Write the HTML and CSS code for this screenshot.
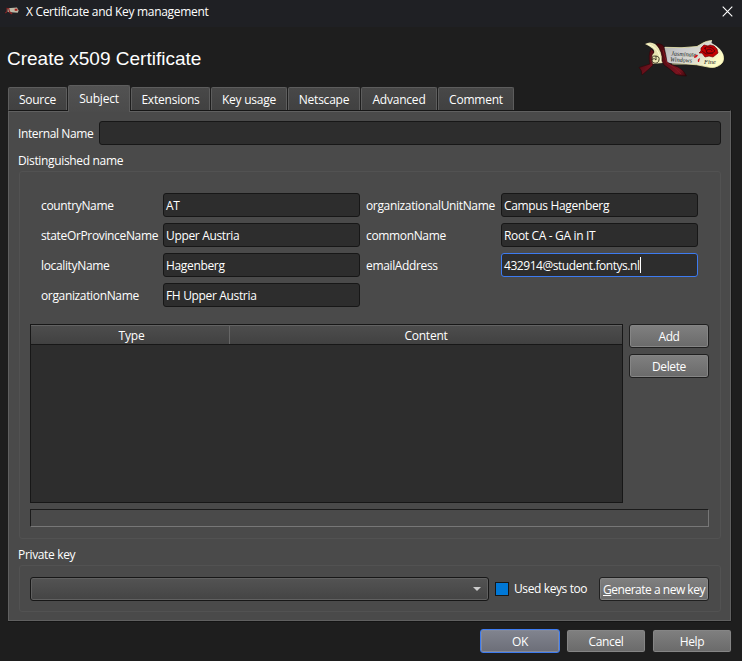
FILE: index.html
```
<!DOCTYPE html>
<html lang="en">
<head>
<meta charset="utf-8">
<title>X Certificate and Key management</title>
<link rel="stylesheet" href="styles.css">
</head>
<body>
<div class="window">
  <header class="titlebar">
    <svg class="app-icon" width="14" height="8" viewBox="0 0 88 42" preserveAspectRatio="none">
      <path d="M16 6L75 2 86 18 80 30 16 26Z" fill="#bdb9a6"/>
      <path d="M10 4L27 7 31 22 48 34 39 40 24 26 21 12 13 12 14 26 4 34 0 29 9 23Z" fill="#8e2424"/>
      <path d="M61 9H78V20H61Z" fill="#a51b18"/>
    </svg>
    <span class="window-title">X Certificate and Key management</span>
    <svg class="close" width="11" height="11" viewBox="0 0 11 11"><path d="M.7.7l9.6 9.6M10.3.7L.7 10.3" stroke="#fff" stroke-width="1.1"/></svg>
  </header>
  <div class="heading">
    <h1>Create x509 Certificate</h1>
    <svg class="logo" width="90" height="44" viewBox="0 0 90 44">
      <defs>
        <linearGradient id="paper" x1="0" y1="0" x2="1" y2=".5">
          <stop offset="0" stop-color="#aeb0a5"/><stop offset=".35" stop-color="#c9c9cc"/><stop offset=".7" stop-color="#dcdcd0"/><stop offset="1" stop-color="#fffcc5"/>
        </linearGradient>
        <linearGradient id="ribbon" x1="0" y1="0" x2="1" y2="1">
          <stop offset="0" stop-color="#420609"/><stop offset=".55" stop-color="#65101a"/><stop offset=".8" stop-color="#791420"/><stop offset="1" stop-color="#350609"/>
        </linearGradient>
      </defs>
      <path d="M26 9Q45 10.5 59 8.5L65 5Q68 3 74 2.5L73.5 5Q83 10 85.5 17Q87 25 80 28Q76 30.5 70 29Q58 26 48 26L27 25Z" fill="url(#paper)"/>
      <path d="M27 9.3Q45 10.5 59 8.5L65 5Q68 3 74 2.5M85 18Q87 25 80 28Q76 30.5 70 29Q58 26 48 26H34" fill="none" stroke="#efebae" stroke-width=".8"/>
      <path d="M7 6Q12 3 17 6Q23 10 24 17L25 25L13 26L12 17L16 15Q18 11 7 6Z" fill="#e9e3b1"/>
      <path d="M10 6.4Q18 9 21 16L23 24" fill="none" stroke="#fffed6"/>
      <path d="M14 22q-1-4 3-4 5 0 4 4-1 4-5 3-3-1-2-4 3-1 4 1M18 18v4" fill="none" stroke="#36311f" stroke-width=".9"/>
      <path d="M18 6Q24 5 26 9Q28 17 29 24Q34 27 40 29Q46 32 48.5 38Q44 38 38 36.5Q31 30 26 27L24 23Q25 14 18 6Z" fill="url(#ribbon)" stroke="#250406" stroke-width=".6"/>
      <path d="M29 25Q38 30 43 36M25 12Q27 20 29 25" stroke="#8e1621" stroke-width=".8" fill="none"/>
      <path d="M13 11Q10 17 12 26L1 29.5Q4 32 4 37L12 30L15 27Q13 23 14 17L16 14Z" fill="url(#ribbon)" stroke="#300508" stroke-width=".6"/>
      <g class="inscription">
        <text x="33" y="17.5" textLength="25" lengthAdjust="spacingAndGlyphs" transform="rotate(3 33 18)">Jasminate</text>
        <text x="32" y="23.5" textLength="22" lengthAdjust="spacingAndGlyphs" transform="rotate(3 32 24)">Windows</text>
        <text x="66" y="26" textLength="12" lengthAdjust="spacingAndGlyphs">Fine</text>
      </g>
      <path d="M63 10l3-3 4 1 2-1 4 1 3 3 1 4-5 4-4-1-4 1-3-4-3 0 2-2z" fill="#c50002" stroke="#720006" stroke-width=".7"/>
      <path d="M66 11q2-3 5-2 4 0 6 4-2 3-7 2-3-1-1-3 4-2 5 1M64 13l4 3 7-1M67 9l2 6" fill="none" stroke="#57000a" stroke-width=".9"/>
      <path d="M56 20q1-4 4-3-1 3-4 3zm4 4q-1-3 2-4l-1 4z" fill="#d21319"/>
    </svg>
  </div>
  <nav class="tabs">
    <div class="tab source"><span>Source</span></div>
    <div class="tab active"><span>Subject</span></div>
    <div class="tab extensions"><span>Extensions</span></div>
    <div class="tab usage"><span>Key usage</span></div>
    <div class="tab netscape"><span>Netscape</span></div>
    <div class="tab advanced"><span>Advanced</span></div>
    <div class="tab comment"><span>Comment</span></div>
  </nav>
  <main class="panel">
    <div class="internal"><label>Internal Name</label><div class="field"></div></div>
    <div class="group-title">Distinguished name</div>
    <section class="group names">
      <div class="name-grid">
        <label>countryName</label><div class="field">AT</div>
        <label class="right">organizationalUnitName</label><div class="field">Campus Hagenberg</div>
        <label>stateOrProvinceName</label><div class="field">Upper Austria</div>
        <label class="right">commonName</label><div class="field">Root CA - GA in IT</div>
        <label>localityName</label><div class="field">Hagenberg</div>
        <label class="right">emailAddress</label><div class="field focused"><span class="email">432914@student.fontys.nl</span><i class="caret"></i></div>
        <label>organizationName</label><div class="field">FH Upper Austria</div>
      </div>
      <div class="entries">
        <div class="table"><div class="thead"><div>Type</div><div>Content</div></div></div>
        <div class="actions"><div class="button">Add</div><div class="button">Delete</div></div>
      </div>
      <div class="status"></div>
    </section>
    <div class="group-title key-title">Private key</div>
    <section class="group key">
      <div class="combo"><i class="arrow"></i></div>
      <i class="check"></i><span class="check-label">Used keys too</span>
      <div class="button generate"><span><u>G</u>enerate a new key</span></div>
    </section>
  </main>
  <footer>
    <div class="button ok">OK</div><div class="button">Cancel</div><div class="button">Help</div>
  </footer>
</div>
</body>
</html>
```
FILE: styles.css
```
* { box-sizing: border-box; }
body { margin: 0; background: #1e1e1e; color: #fff; font: 12px/16px "Open Sans", "Noto Sans", sans-serif; letter-spacing: -.39px; }
.window { width: 742px; height: 661px; display: flex; flex-direction: column; overflow: hidden; }
.titlebar { height: 27px; flex: none; background: #1f2024; display: flex; align-items: flex-start; padding: 4px 9px 0 5px; }
.window-title { letter-spacing: -.31px; }
.app-icon { margin: 3px 7px 0 0; }
.close { margin: 2px 0 0 auto; }
.heading { height: 58px; flex: none; display: flex; justify-content: space-between; padding: 11px 14px 0 7px; }
h1 { margin: 10px 0 0; font: 19px/22px "Liberation Sans", Arial, sans-serif; letter-spacing: 0; }
.inscription { font: italic 6.5px "Liberation Serif", serif; fill: #202622; letter-spacing: 0; }
.tabs { height: 25px; flex: none; display: flex; align-items: flex-end; padding-left: 8px; letter-spacing: -.22px; }
.tab { height: 23px; border: 1px solid #5d5d5d; border-bottom: 0; border-radius: 2px 2px 0 0; background: linear-gradient(#484848, #414141); text-align: center; padding-top: 4px; margin-right: 1px; }
.source { width: 59px; }
.active { width: 62px; height: 27px; margin-bottom: -2px; padding-top: 5px; background: linear-gradient(#525252, #4b4b4b); position: relative; }
.extensions { width: 79px; }
.usage { width: 76px; }
.netscape { width: 72px; }
.advanced { width: 76px; }
.comment { width: 76px; }
.panel { margin-left: 8px; width: 723px; height: 511px; flex: none; border: 1px solid #606060; border-top: 1px solid #161616; box-shadow: inset 0 1px #606060, 0 1px #141414, 1px 0 #171717; background: #4a4a4a; padding: 10px 9px 0; }
.internal { display: flex; align-items: center; height: 24px; }
.internal label { width: 81px; padding-top: 2px; }
.internal .field { flex: 1; }
.field { height: 24px; border: 1px solid #171717; border-radius: 3px; background: #2d2d2d; padding: 4px 2px; white-space: nowrap; letter-spacing: -.34px; }
.group-title { height: 26px; padding-top: 8px; letter-spacing: -.34px; }
.group { border: 1px solid #525252; border-radius: 3px; margin-left: 1px; width: 702px; }
.names { height: 368px; padding: 21px 11px 0 10px; }
.name-grid { display: grid; grid-template-columns: 122px 197px 141px 197px; row-gap: 6px; padding-left: 11px; align-items: center; white-space: nowrap; }
.name-grid label { padding-top: 2px; letter-spacing: -.35px; }
.name-grid .right { padding-left: 6px; }
.focused { border-color: #3d7bf0; display: flex; align-items: center; }
.email { letter-spacing: -.45px; padding-top: 1px; }
.caret { width: 1px; height: 16px; background: #fff; }
.entries { display: flex; gap: 6px; height: 179px; margin-top: 17px; }
.table { width: 593px; border: 1px solid #171717; background: #2d2d2d; }
.thead { height: 20px; border-top: 1px solid #626262; border-bottom: 1px solid #171717; display: grid; grid-template-columns: 199px 1fr; background: linear-gradient(#4d4d4d, #414141); text-align: center; line-height: 20px; letter-spacing: -.22px; }
.thead div { height: 18px; }
.thead div:first-child { border-right: 1px solid #666; padding-left: 3px; }
.actions { display: flex; flex-direction: column; gap: 6px; }
.button { width: 80px; height: 24px; border: 1px solid #202020; border-radius: 3px; background: linear-gradient(#808080, #6a6a6a); box-shadow: inset 0 0 0 1px #858585; text-align: center; line-height: 23px; white-space: nowrap; }
.status { height: 18px; margin-top: 6px; border: 1px solid; border-color: #1b1b1b #777 #777 #1b1b1b; }
.key-title { padding-top: 8px; }
.key { height: 47px; display: flex; align-items: center; padding: 0 11px 0 10px; }
.combo { width: 459px; height: 24px; border: 1px solid #171717; border-radius: 3px; background: linear-gradient(#535353, #444); box-shadow: inset 0 0 0 1px #606060; display: flex; justify-content: flex-end; align-items: center; padding-right: 7px; }
.arrow { border: 4px solid transparent; border-top-color: #ccc; border-bottom: 0; }
.check { width: 14px; height: 14px; border: 1px solid #171717; background: #0078d7; margin: 0 5px 0 6px; }
.generate { width: 110px; margin-left: auto; letter-spacing: -.48px; }
u { text-underline-offset: 1px; }
footer { display: flex; justify-content: flex-end; gap: 6px; padding: 8px 10px 0 0; }
.ok { border-color: #3d7bf0; background: linear-gradient(#81848f, #6c6e78); box-shadow: inset 0 0 0 1px #858997; }
```
